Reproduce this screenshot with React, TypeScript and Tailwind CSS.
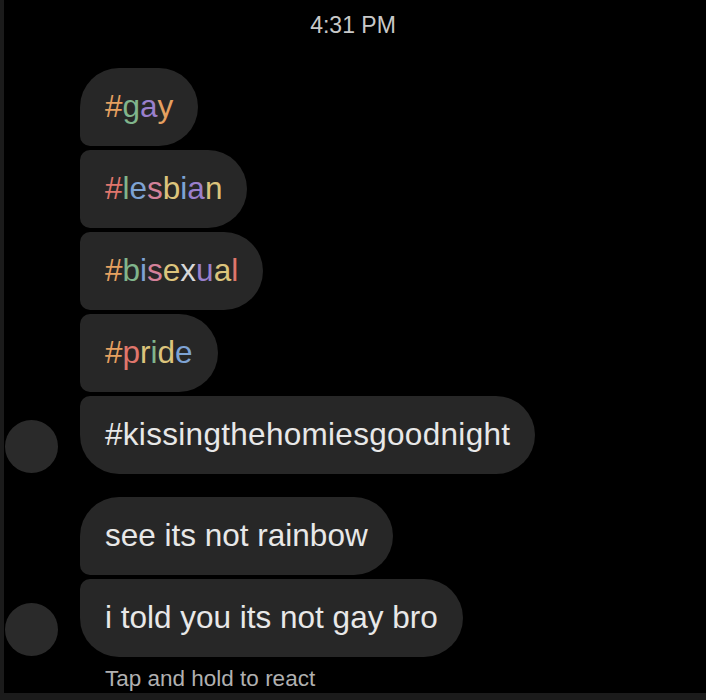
import React from "react";

const R = "#e0766c";
const O = "#e5a060";
const Y = "#dcc47c";
const G = "#80b58c";
const B = "#7ea3d4";
const P = "#9a80cc";
const K = "#d4819a";

const rainbow: Record<string, string[]> = {
  "#gay": [O, G, P, O],
  "#lesbian": [R, G, B, K, Y, B, P, Y],
  "#bisexual": [O, G, B, K, Y, "#d8d8d8", P, Y, R],
  "#pride": [O, R, Y, G, Y, B],
};

function Rainbow({ text }: { text: string }) {
  const cols = rainbow[text];
  return (
    <span>
      {text.split("").map((ch, i) => (
        <span key={i} style={{ color: cols[i % cols.length] }}>
          {ch}
        </span>
      ))}
    </span>
  );
}

function Bubble({
  children,
  pos,
}: {
  children: React.ReactNode;
  pos: "first" | "mid" | "last";
}) {
  const radius =
    pos === "first"
      ? "rounded-tl-[39px] rounded-bl-[10px]"
      : pos === "mid"
      ? "rounded-tl-[10px] rounded-bl-[10px]"
      : "rounded-tl-[10px] rounded-bl-[39px]";
  return (
    <div
      className={`bg-[#272727] h-[78px] flex items-center pl-[25px] pr-[25px] rounded-r-[39px] ${radius} text-[31.5px] text-[#e8e8e8] whitespace-nowrap w-fit`}
    >
      {children}
    </div>
  );
}

function Avatar() {
  return <div className="w-[53px] h-[53px] rounded-full bg-[#2a2a2a] shrink-0 mb-[1px]" />;
}

export default function App() {
  return (
    <div
      className="w-[706px] h-[700px] bg-black relative overflow-hidden flex flex-col"
      style={{ fontFamily: '"Liberation Sans", Arial, sans-serif' }}
    >
      <div className="absolute left-0 top-0 bottom-0 w-[4px] bg-[#1b1b1b]" />
      <div className="text-center text-[#c8c8c8] text-[23px] pt-[8px] h-[68px]">4:31 PM</div>

      <div className="flex flex-col gap-[4px]">
        <div className="flex items-end gap-[22px] pl-[5px]">
          <div className="w-[53px] shrink-0" />
          <div className="flex flex-col gap-[4px]">
            <Bubble pos="first">
              <Rainbow text="#gay" />
            </Bubble>
            <Bubble pos="mid">
              <Rainbow text="#lesbian" />
            </Bubble>
            <Bubble pos="mid">
              <Rainbow text="#bisexual" />
            </Bubble>
            <Bubble pos="mid">
              <Rainbow text="#pride" />
            </Bubble>
          </div>
        </div>
        <div className="flex items-end gap-[22px] pl-[5px]">
          <Avatar />
          <Bubble pos="last">
            <span className="tracking-[0.3px]">#kissingthehomiesgoodnight</span>
          </Bubble>
        </div>
      </div>

      <div className="flex flex-col gap-[4px] mt-[23px]">
        <div className="flex items-end gap-[22px] pl-[5px]">
          <div className="w-[53px] shrink-0" />
          <Bubble pos="first">see its not rainbow</Bubble>
        </div>
        <div className="flex items-end gap-[22px] pl-[5px]">
          <Avatar />
          <Bubble pos="last">i told you its not gay bro</Bubble>
        </div>
      </div>

      <div className="pl-[105px] pt-[5px] text-[22.5px] text-[#b0b0b0]">Tap and hold to react</div>

      <div className="absolute left-0 right-0 bottom-0 h-[7px] bg-[#1b1b1b]" />
    </div>
  );
}
